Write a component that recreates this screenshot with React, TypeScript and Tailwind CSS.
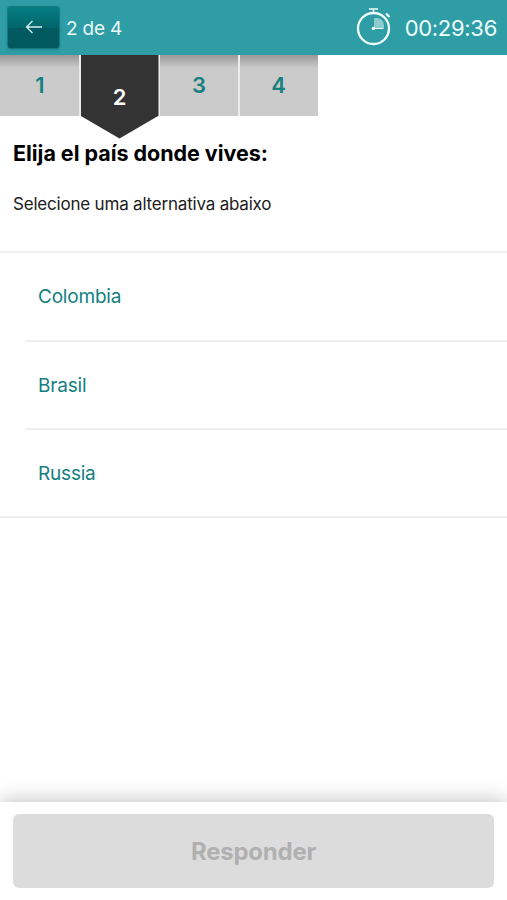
const steps = [1, 2, 3, 4];
const currentStep = 2;
const options = ["Colombia", "Brasil", "Russia"];

export default function App() {
  return (
    <div className="flex h-[900px] w-[507px] flex-col overflow-hidden bg-white font-['Inter',sans-serif] text-black">
      <header className="flex h-[54.5px] shrink-0 items-center bg-[#2e9da5] pl-[7px] pr-[10px] pt-px text-white">
        <button
          aria-label="Voltar"
          className="flex h-[43px] w-[53px] items-center justify-center rounded-[3px] border border-[#147c81] bg-linear-to-b from-[#067e82] from-0% via-[#00666b] via-50% to-[#00595f] to-50% pb-px shadow-sm"
        >
          <ArrowIcon />
        </button>
        <span className="ml-[6px] pt-[2px] text-[19px] tracking-[-0.2px] text-[#e9fafa]">2 de 4</span>
        <div className="ml-auto flex items-center gap-[13px]">
          <StopwatchIcon />
          <span className="pt-px text-[22px] tracking-[-0.3px] text-[#effdfd]">00:29:36</span>
        </div>
      </header>

      <nav className="flex h-[61px] shrink-0 gap-[1.5px] bg-linear-to-r from-[#ececec] from-[317px] to-white to-[317px]">
        {steps.map((step) => (
          <StepTab key={step} step={step} active={step === currentStep} />
        ))}
      </nav>

      <main className="flex-1">
        <div className="h-[135.5px] px-[13px] pt-[23px]">
          <h1 className="text-[21.5px] font-bold leading-[28px] tracking-[-0.04px]">Elija el país donde vives:</h1>
          <p className="mt-[25px] text-[17px] leading-6 tracking-[-0.2px] text-[#202020]">
            Selecione uma alternativa abaixo
          </p>
        </div>
        <ul className="border-y-2 border-[#efefef] pl-[25px]">
          {options.map((option) => (
            <li
              key={option}
              className="flex h-[88.5px] items-center border-b-2 border-[#efefef] pl-[13px] pt-[2px] text-[19px] tracking-[-0.2px] text-[#13807f] last:h-[86px] last:border-b-0"
            >
              {option}
            </li>
          ))}
        </ul>
      </main>

      <footer className="h-[98px] shrink-0 bg-white px-[13px] pt-3 shadow-[0_0_20px_rgba(0,0,0,0.28)]">
        <button
          disabled
          className="h-[74px] w-full rounded-[6px] bg-[#dcdcdc] pt-px text-[24px] font-bold tracking-[-0.25px] text-[#b0b0b0]"
        >
          Responder
        </button>
      </footer>
    </div>
  );
}

function StepTab({ step, active }: { step: number; active: boolean }) {
  if (active) {
    return (
      <div className="h-[84px] w-[78px] bg-white [clip-path:polygon(0_0,100%_0,100%_73%,50%_100%,0_73%)]">
        <div className="flex h-full items-center justify-center bg-[#333333] pt-px text-[22px] font-semibold text-white">
          {step}
        </div>
      </div>
    );
  }

  return (
    <div className="flex h-[61px] w-[78px] items-center justify-center bg-[#cbcbcb] bg-linear-to-b from-[#999999] to-[#cbcbcb] to-[13px] text-[22px] font-semibold text-[#15807f] first:w-[79px] first:pl-px">
      {step}
    </div>
  );
}

function ArrowIcon() {
  return (
    <svg width="18" height="16" viewBox="0 0 18 16" fill="none" stroke="#d6eeee" strokeWidth="1.3">
      <path d="M7.5 2 1.5 8l6 6M1.5 8H17" />
    </svg>
  );
}

function StopwatchIcon() {
  return (
    <svg className="mb-[2px]" width="36" height="40" viewBox="0 0 36 40" fill="none" stroke="#effdfd">
      <circle cx="17.5" cy="21.5" r="15.5" strokeWidth="2.3" />
      <path d="M13 2h9M17.5 2v4" strokeWidth="1.7" />
      <path d="m30 6.5 3.5 3.5" strokeWidth="2.3" />
      <path d="M18 21V11h3.5a7 7 0 0 1 6.5 7v3Z" fill="#8dcbd0" stroke="none" />
      <path d="M18 21.5h9.5" strokeWidth="1" />
      <circle cx="17.5" cy="21.5" r="1.8" fill="#effdfd" stroke="none" />
    </svg>
  );
}
